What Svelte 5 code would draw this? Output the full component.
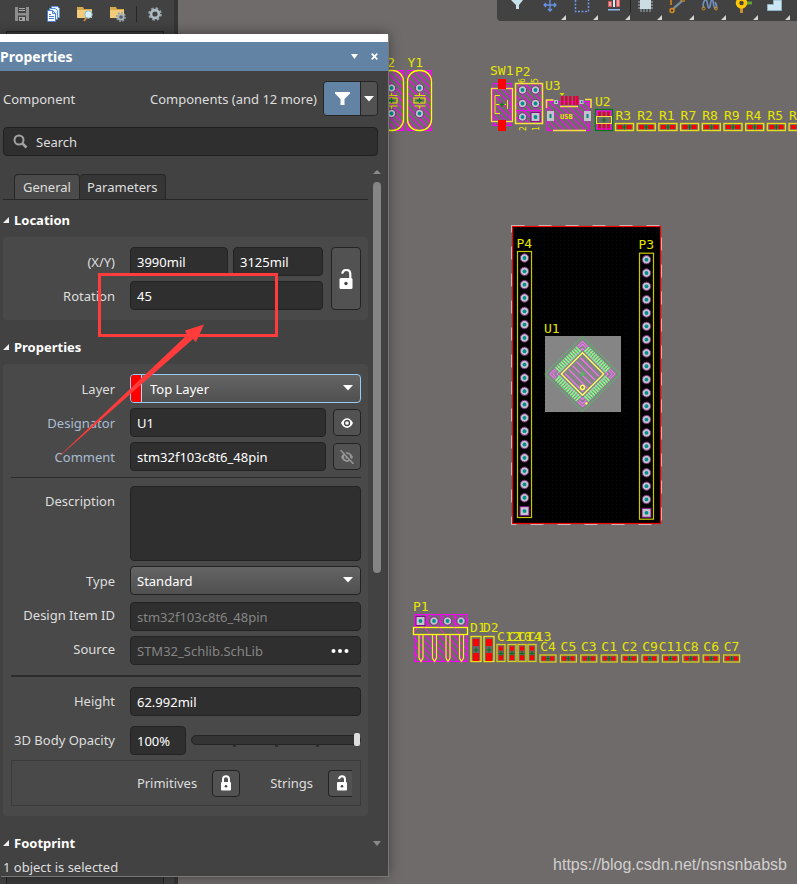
<script>
  let x = $state('3990mil');
  let y = $state('3125mil');
  let rotation = $state('45');
  let designator = $state('U1');
  let comment = $state('stm32f103c8t6_48pin');
  let description = $state('');
  let height = $state('62.992mil');
  let opacity = $state(100);

  const crystals = [391.5, 419.5];
  const resistors = ['R3', 'R2', 'R1', 'R7', 'R8', 'R9', 'R4', 'R5', 'R6'];
  const capacitors = ['C4', 'C5', 'C3', 'C1', 'C2', 'C9', 'C11', 'C8', 'C6', 'C7'];
  const uprightCaps = [
    { name: 'C12', x: 501 },
    { name: 'C10', x: 512 },
    { name: 'C14', x: 522 },
    { name: 'C13', x: 532 }
  ];
  const diodes = [
    { name: 'D1', x: 476 },
    { name: 'D2', x: 489 }
  ];
  const headers = [
    { name: 'P4', x: 524.5, y: 258 },
    { name: 'P3', x: 646.5, y: 259.7 }
  ];
  const pins = Array.from({ length: 20 }, (_, i) => i);
  const chipPins = Array.from({ length: 12 }, (_, i) => -14.3 + i * 2.6);
</script>

{#snippet pad(cx, cy, square)}
  {#if square}
    <rect x={cx - 4.5} y={cy - 4.5} width="9" height="9" fill="#c3c3c9" stroke="#7d0c86" />
  {:else}
    <circle {cx} {cy} r="4.2" fill="#c3c3c9" stroke="#7d2a86" />
  {/if}
  <circle {cx} {cy} r="1.9" fill="#008f8f" />
{/snippet}

{#snippet openLock()}
  <svg width="14" height="20" viewBox="0 0 14 20" aria-hidden="true">
    <path d="M3.2 4.6C3.6 2.2 5 1 7.2 1c2.700 0 4.100 1.600 4.100 4.200V10" fill="none" stroke="#fff" stroke-width="2.200" />
    <rect x=".5" y="9" width="13" height="11" rx="1.500" fill="#fff" />
    <circle cx="7" cy="14.500" r="1.700" fill="#444" />
  </svg>
{/snippet}

{#snippet cross(cx, cy)}
  <path d="M{cx - 2.5} {cy}h5M{cx} {cy - 2.5}v5" stroke="#007a18" stroke-width="1.2" />
{/snippet}

<div class="app">
  <svg class="canvas" width="797" height="884" viewBox="0 0 797 884" role="img" aria-label="PCB layout">
    <defs>
      <pattern id="hatch" width="7" height="7" patternUnits="userSpaceOnUse">
        <path d="M-1 -1L8 8M-1 6L1 8M6 -1L8 1" stroke="#f0f" stroke-width="1.2" />
      </pattern>
      <pattern id="grid" width="4" height="4" patternUnits="userSpaceOnUse">
        <rect width="1" height="1" fill="#0a0a0a" />
      </pattern>
    </defs>

    {#each crystals as cx, i}
      <text x={cx - 12} y="67">Y{2 - i}</text>
      <rect x={cx - 12} y="70.5" width="24" height="60" fill="url(#hatch)" stroke="#f0f" />
      <rect x={cx - 12} y="70.5" width="24" height="60" rx="11" fill="none" stroke="#ff0" stroke-width="1.300" />
      <path d="M{cx} 90V95.500M{cx - 5} 95.500h11M{cx} 106v6M{cx - 5} 106h11" stroke="#dfdf00" stroke-width="1.200" />
      <rect x={cx - 5.5} y="98" width="11" height="5" fill="#6f6b6a" stroke="#dfdf00" stroke-width="1.200" />
      {@render cross(cx, 100.5)}
      {@render pad(cx, 88, false)}
      {@render pad(cx, 113.5, false)}
    {/each}

    <text x="490" y="75">SW1</text>
    <rect x="493.500" y="83.500" width="18" height="42" fill="url(#hatch)" stroke="#f0f" />
    <rect x="491.500" y="88.500" width="21" height="33" fill="none" stroke="#ffe03c" stroke-width="1.300" />
    <path d="M500 95.500h-5v18h5M496 104.500h10M507.500 100v9" fill="none" stroke="#ee0" />
    <rect x="498" y="79" width="8" height="10" fill="#f00" />
    <rect x="498" y="120" width="8" height="11" fill="#f00" />
    {@render cross(502, 104.5)}

    <text x="515" y="76">P2</text>
    <rect x="515.500" y="83.500" width="27" height="40" fill="url(#hatch)" stroke="#ffe03c" stroke-width="1.500" />
    <path d="M516 110.500h26" stroke="#f0f" />
    {#each [90, 103.5, 117] as cy}
      {@render pad(522.5, cy, false)}
      {@render pad(535.5, cy, cy === 117)}
    {/each}
    <g class="tiny">
      <text transform="translate(525 83) rotate(-90)">6</text>
      <text transform="translate(538 83) rotate(-90)">5</text>
      <text transform="translate(526 131) rotate(-90)">2</text>
      <text transform="translate(539 131) rotate(-90)">1</text>
    </g>

    <text x="545" y="90">U3</text>
    <rect x="547.500" y="101.500" width="42" height="29" fill="url(#hatch)" stroke="#f0f" />
    <path d="M546.500 108v-8h7M585 99.500h6V108M553 130.500h33" fill="none" stroke="#ffe03c" stroke-width="1.500" />
    <path d="M559.500 93h5l-2.500 3z" fill="#dd0" />
    {#each [561, 565, 569, 573, 576] as px}
      <rect x={px} y="96" width="2.500" height="9" fill="#e0003c" />
    {/each}
    <path d="M560 106.500h18" stroke="#ffe03c" stroke-width="1.500" />
    <path d="M554 100h4v4h-4zM579.500 100h4v4h-4zM547 111h7v10h-7zM584 111h7v10h-7z" fill="#c3c3c9" />
    <path d="M555.500 101h1.500v2h-1.500zM581 101h1.500v2H581zM549.500 114h2v4h-2zM586.500 114h2v4h-2z" fill="#088" />
    <text class="usb" x="560" y="119">USB</text>

    <text x="595" y="106">U2</text>
    <rect x="595.500" y="109.500" width="17" height="21" fill="none" stroke="#057a18" stroke-width="1.300" />
    <path d="M598 111h3v6h-3zM602.500 111h3v6h-3zM607 111h3v6h-3zM598 124h3v6h-3zM602.500 124h3v6h-3zM607 124h3v6h-3z" fill="#e0003c" />
    <rect x="596.500" y="111" width="15" height="18" fill="none" stroke="#f0f" />
    <rect x="596.500" y="116.500" width="15" height="7" fill="none" stroke="#ffe03c" />
    {@render cross(604, 120)}

    {#each resistors as name, i}
      {@const rx = 615.5 + i * 21.7}
      <text x={rx} y="120">{name}</text>
      <rect x={rx} y="123.500" width="18" height="7" fill="#6f606a" stroke="#e8df1b" stroke-width="1.400" />
      <path d="M{rx + 2} 125h5v4h-5zM{rx + 11} 125h5v4h-5z" fill="#f00" />
      {@render cross(rx + 9, 127)}
    {/each}

    <rect x="513" y="226" width="148" height="298" fill="#000" />
    <rect x="515" y="228" width="144" height="294" fill="url(#grid)" />
    <rect x="511.500" y="225.500" width="150" height="299" fill="none" stroke="#c9c9c9" stroke-dasharray="13 14" />
    <rect x="512.500" y="226.500" width="148" height="297" fill="none" stroke="#f00000" stroke-width="1.200" />

    {#each headers as h}
      <text x={h.x - 8} y={h.y - 10.5}>{h.name}</text>
      <rect x={h.x - 7} y={h.y - 6.5} width="14" height="266" fill="none" stroke="#c8c800" stroke-width="1.200" />
      {#each pins as i}
        {@render pad(h.x, h.y + i * 13.32, i === 19)}
      {/each}
    {/each}

    <text x="544" y="333">U1</text>
    <rect x="545" y="336" width="76" height="76" fill="#858585" />
    <g transform="translate(582.500 374) rotate(45)">
      <rect x="-26.500" y="-26.500" width="53" height="53" fill="none" stroke="#63ad70" />
      <rect x="-18" y="-18" width="36" height="36" fill="none" stroke="#ff7bff" />
      {#each [0, 90, 180, 270] as angle}
        <g transform="rotate({angle})">
          <path d="M-23 -16v-7h7M-21 -16v-5h5" fill="none" stroke="#ff70ff" />
          {#each chipPins as px}
            <rect x={px - 0.75} y="-24" width="1.600" height="7" fill="#77ff83" />
          {/each}
          <path d="M-15 -21.500h30" stroke="#ffc5b8" stroke-dasharray="1 1.600" />
        </g>
      {/each}
      <rect x="-15" y="-15" width="30" height="30" fill="#858585" stroke="#ffff66" stroke-width="1.300" />
      <path d="M-13 -10h26M-13 -4.500h26M-13 1h26M-13 6.500h26M-13 12h26" stroke="#ff70ff" stroke-width="1.100" />
      <rect x="-2" y="-2" width="4" height="4" fill="#57b567" />
      <circle cx="9.500" cy="9.500" r="2" fill="#777" stroke="#ff5" stroke-width="1.500" />
      <circle cx="23.500" cy="18" r="1.300" fill="#ff5" />
    </g>

    <text x="413" y="611">P1</text>
    <rect x="414.500" y="614.500" width="53" height="47" fill="url(#hatch)" stroke="#f0f" />
    <path d="M427.500 615v12M441 615v12M454.500 615v12" stroke="#f0f" />
    {#each [420.5, 434, 447.5, 461] as px, i}
      {@render pad(px, 621, i === 0)}
      <path d="M{px - 1.5} 635v23l2 3.500l2 -3.500v-23" fill="none" stroke="#ffe926" stroke-width="1.200" />
    {/each}
    <rect x="413.500" y="627.500" width="54" height="7" fill="#706568" stroke="#ffff13" stroke-width="1.300" />
    <path d="M414 632l4-4M424 627.500l6 6.500M439 627.500l6 6.500M454 627.500l6 6.500" stroke="#ff30c0" />

    {#each diodes as d}
      <text x={d.x - 6} y="632">{d.name}</text>
      <rect x={d.x - 5} y="636.500" width="10" height="25" fill="#6f606a" stroke="#e8df1b" stroke-width="1.400" />
      <path d="M{d.x - 3} 639h6v7h-6zM{d.x - 3} 653h6v8h-6z" fill="#f00" />
      {@render cross(d.x, 650)}
    {/each}
    {#each uprightCaps as c}
      <text x={c.x - 4} y="641">{c.name}</text>
      <rect x={c.x - 4} y="644.500" width="8" height="17" fill="#6f606a" stroke="#d8d01b" stroke-width="1.300" />
      <path d="M{c.x - 2} 646.500h4v4h-4zM{c.x - 2} 655h4v5h-4z" fill="#f00" />
      {@render cross(c.x, 653.5)}
    {/each}
    {#each capacitors as name, i}
      {@const cx = 548 + i * 20.4}
      <text x={cx} y="651" text-anchor="middle">{name}</text>
      <rect x={cx - 8} y="655" width="16" height="7" fill="#6f606a" stroke="#d8d01b" stroke-width="1.300" />
      <path d="M{cx - 6} 656.500h4v4h-4zM{cx + 2} 656.500h4v4h-4z" fill="#f00" />
      {@render cross(cx, 658.5)}
    {/each}
  </svg>

  <div class="dock">
    <div class="dock-tools">
      <button aria-label="Save">
        <svg width="16" height="16" viewBox="0 0 16 16"><path fill="#8d8d8d" d="M1 1h14v14H1z" /><path fill="#444" d="M4 1h8v6H4zM4 9.500h8V15H4z" /><path fill="#aaa" d="M5 2h6v1H5zM5 4h6v1H5zM5 11h6v4H5z" /><path fill="#444" d="M6 12h2v2H6z" /></svg>
      </button>
      <button aria-label="Copy">
        <svg width="16" height="16" viewBox="0 0 16 16"><path fill="#e9f3ff" stroke="#5f93d8" d="M6.500.5h6l2 2v9h-8z" /><path fill="#e9f3ff" stroke="#5f93d8" d="M4.500 2.500h6l2 2v9h-8z" /><path fill="#fff" stroke="#4c82cd" d="M2.500 4.500h5l3 3v8h-8zM7.500 4.500v3h3M4 8.500h2M4 10.500h5M4 12.500h5" /></svg>
      </button>
      <button aria-label="Find project">
        <svg width="18" height="16" viewBox="0 0 18 16"><path fill="#d7a94f" d="M1 1h6l1 2h8v9H1z" /><path fill="#f2cb7b" d="M1 4h15v8H1z" /><path stroke="#c98b38" stroke-width="2" d="M11 11l-3 4" /><circle cx="12.500" cy="8.500" r="3.700" fill="#d8eefa" stroke="#8fb3c6" /></svg>
      </button>
      <button aria-label="Project options">
        <svg width="18" height="16" viewBox="0 0 18 16"><path fill="#d7a94f" d="M1 1h6l1 2h7v9H1z" /><path fill="#f2cb7b" d="M1 4h14v8H1z" /><circle cx="12" cy="11" r="4.300" fill="none" stroke="#8d9ba2" stroke-width="1.500" stroke-dasharray="2 1.300" /><circle cx="12" cy="11" r="2.700" fill="#56616a" stroke="#aab7be" stroke-width="1.700" /></svg>
      </button>
      <span class="sep"></span>
      <button aria-label="Settings">
        <svg width="16" height="16" viewBox="0 0 16 16"><circle cx="8" cy="8" r="5.800" fill="none" stroke="#98a5ac" stroke-width="2" stroke-dasharray="2.500 2.050" /><circle cx="8" cy="8" r="3.900" fill="none" stroke="#aebbc2" stroke-width="2.600" /></svg>
      </button>
    </div>
    <div class="dock-body"></div>
  </div>

  <div class="canvas-tools">
    <button aria-label="Filter"><svg width="32" height="21" viewBox="0 0 32 21"><path d="M9 0h12l-4 5v4l-3 0V5z" fill="#c7e2ec" /></svg></button>
    <button class="menu" aria-label="Move"><svg width="32" height="21" viewBox="0 0 32 21"><path d="M10 5h12M16 0v11M12 3l-2 2 2 2M20 3l2 2-2 2M14 9l2 2 2-2" fill="none" stroke="#6794e8" stroke-width="1.300" /></svg></button>
    <button class="menu" aria-label="Select"><svg width="32" height="21" viewBox="0 0 32 21"><path d="M9.500 0v11.500h13V0" fill="none" stroke="#6f95e8" stroke-width="1.500" stroke-dasharray="2 1.500" /></svg></button>
    <button class="menu" aria-label="Align"><svg width="32" height="21" viewBox="0 0 32 21"><path fill="#e8a0a0" stroke="#e05c5c" d="M10.500 1.500h3v5h-3zM18.500 -1h3v7.500h-3z" /><path fill="#d8ecfb" d="M15 0h2v7h-2z" /><path fill="#8bb8f0" d="M10 9h12v1.500H10z" /></svg></button>
    <span class="sep"></span>
    <button class="menu" aria-label="Place component"><svg width="32" height="21" viewBox="0 0 32 21"><path d="M11 0v12M14 0v12M17 0v12M20 0v12M8 2h15M8 5h15M8 8h15" stroke="#a4b4bb" /><rect x="10" y="0" width="11" height="9" fill="#cbdce3" /></svg></button>
    <button class="menu" aria-label="Route"><svg width="32" height="21" viewBox="0 0 32 21"><path d="M11 9L20 1M9 0v5M18 1h5" stroke="#c98320" stroke-width="1.700" /><path d="M12 8l8-7" stroke="#6f8eab" stroke-width="2" /><circle cx="10" cy="10.500" r="2" fill="none" stroke="#d98a1c" stroke-width="1.500" /></svg></button>
    <button class="menu" aria-label="Tune"><svg width="32" height="21" viewBox="0 0 32 21"><path d="M10 8c-2-3 0-8 2-8s1 8 3 8 1-8 3-8 1 8 3 8 2-3 0-6" fill="none" stroke="#7191bd" stroke-width="1.700" /><circle cx="9.500" cy="8.500" r="1.500" fill="none" stroke="#d98a1c" /><circle cx="22" cy="8.500" r="1.500" fill="none" stroke="#d98a1c" /></svg></button>
    <button class="menu" aria-label="Via"><svg width="32" height="21" viewBox="0 0 32 21"><path d="M16 3h10" stroke="#62a338" stroke-width="3" /><path d="M15.500 3v10" stroke="#c6922d" stroke-width="3" /><circle cx="15.500" cy="3" r="4" fill="#444" stroke="#ffc800" stroke-width="3.500" /></svg></button>
    <button class="menu" aria-label="Polygon"><svg width="32" height="21" viewBox="0 0 32 21"><path d="M9.500 10.500V4.500h6V0h8v10.500z" fill="#cce6f2" stroke="#8fb2c4" /></svg></button>
  </div>

  <section class="panel">
    <header class="titlebar">
      <h1>Properties</h1>
      <button aria-label="Panel menu"><svg width="7" height="5" viewBox="0 0 7 5"><path d="M0 0h7L3.500 5z" fill="#fff" /></svg></button>
      <button aria-label="Close"><svg width="7" height="7" viewBox="0 0 7 7"><path d="M.7.7l5.600 5.600M6.300.7L.7 6.300" stroke="#fff" stroke-width="1.800" /></svg></button>
    </header>

    <div class="scope">
      <span>Component</span>
      <span class="count">Components (and 12 more)</span>
      <div class="filter">
        <button class="funnel" aria-label="Filter"><svg width="15" height="13" viewBox="0 0 15 13"><path d="M0 0h15v1.500L9.500 7v6h-4V7L0 1.500z" fill="#fff" /></svg></button>
        <button class="more" aria-label="Filter options"><svg width="10" height="6" viewBox="0 0 10 6"><path d="M0 0h10L5 5.500z" fill="#fff" /></svg></button>
      </div>
    </div>

    <label class="search">
      <svg width="15" height="15" viewBox="0 0 15 15" aria-hidden="true"><circle cx="6" cy="6" r="4.500" fill="none" stroke="#a2a2a2" stroke-width="2" /><path d="M9.300 9.300L13.500 13.500" stroke="#a2a2a2" stroke-width="2.600" /></svg>
      <input type="search" placeholder="Search" aria-label="Search" />
    </label>

    <div class="content">
      <div class="main">
        <div class="tabs" role="tablist">
          <button role="tab" aria-selected="true" class="active">General</button>
          <button role="tab" aria-selected="false">Parameters</button>
        </div>

        <h2>Location</h2>
        <div class="group location">
          <div class="rows">
            <div class="row">
              <label for="x">(X/Y)</label>
              <input id="x" bind:value={x} />
              <input id="y" class="second" aria-label="Y" bind:value={y} />
            </div>
            <div class="row">
              <label for="rotation">Rotation</label>
              <input id="rotation" bind:value={rotation} />
            </div>
          </div>
          <button class="btn tall" aria-label="Lock position">{@render openLock()}</button>
        </div>

        <h2>Properties</h2>
        <div class="group">
          <div class="rows">
            <div class="row">
              <label for="layer">Layer</label>
              <div class="select layer">
                <span class="swatch"></span>
                <select id="layer"><option>Top Layer</option><option>Bottom Layer</option></select>
                <svg width="10" height="6" viewBox="0 0 10 6" aria-hidden="true"><path d="M0 0h10L5 5.500z" fill="#fff" /></svg>
              </div>
            </div>
            <div class="row">
              <label class="link" for="designator">Designator</label>
              <input id="designator" bind:value={designator} />
              <button class="btn" aria-label="Show designator">
                <svg width="12" height="10" viewBox="0 0 12 10"><path d="M0 5C3-1.500 9-1.500 12 5 9 11.500 3 11.500 0 5z" fill="#fff" /><circle cx="6" cy="5" r="2.500" fill="#fff" stroke="#444" stroke-width="1.300" /></svg>
              </button>
            </div>
            <div class="row">
              <label class="link" for="comment">Comment</label>
              <input id="comment" bind:value={comment} />
              <button class="btn" aria-label="Show comment">
                <svg width="14" height="14" viewBox="0 0 14 14"><path d="M1 7c3-6.500 9-6.500 12 0-3 6.500-9 6.500-12 0z" fill="#969696" /><circle cx="7" cy="7" r="2.300" fill="none" stroke="#505050" stroke-width="1.300" /><path d="M1.500 0L14 13" stroke="#505050" stroke-width="2" /><path d="M.5 0L13.500 14" stroke="#969696" stroke-width="1.500" /></svg>
              </button>
            </div>
          </div>
          <hr />
          <div class="rows">
            <div class="row top">
              <label for="description">Description</label>
              <textarea id="description" bind:value={description}></textarea>
            </div>
            <div class="row">
              <label for="type">Type</label>
              <div class="select">
                <select id="type"><option>Standard</option><option>Mechanical</option></select>
                <svg width="10" height="6" viewBox="0 0 10 6" aria-hidden="true"><path d="M0 0h10L5 5.500z" fill="#fff" /></svg>
              </div>
            </div>
          </div>
          <div class="rows library">
            <div class="row">
              <label for="item">Design Item ID</label>
              <input id="item" class="dim" readonly value="stm32f103c8t6_48pin" />
            </div>
            <div class="row">
              <label for="source">Source</label>
              <div class="browse">
                <input id="source" class="dim" readonly value="STM32_Schlib.SchLib" />
                <button aria-label="Browse"><svg width="18" height="4" viewBox="0 0 18 4"><circle cx="2.500" cy="2" r="2" fill="#fff" /><circle cx="9" cy="2" r="2" fill="#fff" /><circle cx="15.500" cy="2" r="2" fill="#fff" /></svg></button>
              </div>
            </div>
          </div>
          <hr class="thick" />
          <div class="rows body">
            <div class="row">
              <label for="height">Height</label>
              <input id="height" bind:value={height} />
            </div>
            <div class="row">
              <label for="opacity">3D Body Opacity</label>
              <input class="percent" aria-label="Opacity value" value="{opacity}%" readonly />
              <div class="slider">
                <input id="opacity" type="range" min="0" max="100" bind:value={opacity} />
                <span class="ticks"><i></i><i></i><i></i></span>
              </div>
            </div>
          </div>
          <div class="locks">
            <span>Primitives</span>
            <button class="btn" aria-label="Lock primitives">
              <svg width="12" height="16" viewBox="0 0 12 16"><path d="M3 8V4.500C3 2.300 4 1.200 6 1.200s3 1.100 3 3.300V8" fill="none" stroke="#fff" stroke-width="2" /><rect x="1" y="7" width="10" height="8.500" rx="1" fill="#fff" /><circle cx="6" cy="11.300" r="1.300" fill="#444" /></svg>
            </button>
            <span class="strings">Strings</span>
            <button class="btn cut" aria-label="Lock strings">
              <svg width="12" height="16" viewBox="0 0 12 16"><path d="M3 4C3.300 2 4.300 1.200 6 1.200c2 0 3 1.100 3 3.300V8" fill="none" stroke="#fff" stroke-width="2" /><rect x="1" y="7" width="10" height="8.500" rx="1" fill="#fff" /><circle cx="6" cy="11.300" r="1.300" fill="#444" /></svg>
            </button>
          </div>
        </div>

        <h2>Footprint</h2>
      </div>

      <div class="scrollbar" aria-hidden="true">
        <svg width="8" height="4" viewBox="0 0 8 4"><path d="M0 4h8L4 0z" fill="#8b8b8b" /></svg>
        <div class="track"><div class="thumb"></div></div>
        <svg width="8" height="5" viewBox="0 0 8 5"><path d="M0 0h8L4 5z" fill="#8b8b8b" /></svg>
      </div>
    </div>

    <footer>1 object is selected</footer>
  </section>

  <svg class="marks" width="300" height="480" viewBox="0 0 300 480" aria-hidden="true">
    <rect x="99.500" y="274.500" width="177" height="61" fill="none" stroke="#ff3b3b" stroke-width="3" />
    <path d="M53.500 461.500L187 335l-2-4.500L204 324.500l-8 17.500-3-3z" fill="#ff3b3b" />
  </svg>

  <div class="watermark">https://blog.csdn.net/nsnsnbabsb</div>
</div>

<style>
  :global(body) {
    margin: 0;
    background: #6f6b6a;
  }
  .app {
    position: relative;
    box-sizing: border-box;
    min-height: 100vh;
    padding-top: 34px;
    overflow: hidden;
    background: #6f6b6a;
    color: #dedede;
    font: 13px/18px "Noto Sans", "Open Sans", sans-serif;
  }
  .app *,
  .app *::before {
    box-sizing: border-box;
  }
  button,
  input,
  select,
  textarea {
    margin: 0;
    padding: 0;
    border: 0;
    background: none;
    color: inherit;
    font: inherit;
  }
  svg {
    display: block;
    flex: none;
  }
  .canvas {
    position: absolute;
    left: 0;
    top: 0;
  }
  .canvas text {
    fill: #e6e600;
    font: 13px "DejaVu Sans Mono", monospace;
  }
  .canvas .tiny text {
    font-size: 8px;
  }
  .canvas .usb {
    font: bold 7px "DejaVu Sans Mono", monospace;
  }

  .dock {
    position: absolute;
    top: 0;
    bottom: 0;
    left: 0;
    width: 178px;
    display: flex;
    flex-direction: column;
    border-right: 4px solid #353535;
    background: #424242;
  }
  .dock-tools {
    display: flex;
    align-items: center;
    gap: 15px;
    height: 31px;
    padding: 0 14px 3px;
  }
  .dock-tools .sep {
    margin: 0 -5px 0 -6px;
  }
  .sep {
    flex: none;
    width: 1px;
    height: 16px;
    background: #262626;
  }
  .dock-body {
    flex: 1;
    margin: 0 10px 0 6px;
    border: 1px solid #252525;
    border-bottom: 0;
    background: #3b3b3b;
  }

  .canvas-tools {
    position: absolute;
    top: 0;
    right: 0;
    width: 300px;
    height: 21px;
    display: flex;
    overflow: hidden;
    padding-left: 5px;
    border-radius: 0 0 0 4px;
    background: #424242;
  }
  .canvas-tools .sep {
    height: 13px;
    margin-right: -1px;
  }
  .canvas-tools .menu {
    position: relative;
  }
  .canvas-tools .menu::after {
    content: "";
    position: absolute;
    right: 0;
    bottom: 1px;
    border-left: 5px solid transparent;
    border-bottom: 5px solid #d5d5d5;
  }

  .panel {
    position: relative;
    width: min(388px, 100%);
    border-top: 8px solid #fff;
    background: #424242;
    box-shadow: 1px 1px 0 #777, 0 0 12px rgba(0, 0, 0, 0.45);
  }
  .titlebar {
    display: flex;
    align-items: center;
    gap: 13px;
    height: 29px;
    padding-right: 10px;
    background: #6283a3;
    color: #fff;
  }
  h1 {
    flex: 1;
    margin: 0;
    font-size: 14px;
    line-height: 18px;
  }
  .scope {
    display: flex;
    align-items: center;
    padding: 10px 10px 11px 3px;
  }
  .count {
    margin: 0 6px 0 auto;
  }
  .filter {
    display: flex;
    height: 35px;
    overflow: hidden;
    border: 1px solid #252525;
    border-radius: 4px;
  }
  .filter button {
    display: grid;
    place-items: center;
  }
  .funnel {
    width: 36px;
    background: #6283a3;
  }
  .more {
    width: 17px;
    border-left: 1px solid #252525;
    background: #525252;
  }
  .search {
    display: flex;
    align-items: center;
    gap: 8px;
    height: 29px;
    margin: 0 10px 10px 3px;
    padding: 0 9px;
    border: 1px solid #202020;
    border-radius: 4px;
    background: #2f2f2f;
  }
  .search input {
    flex: 1;
    min-width: 0;
    outline: 0;
  }
  .search input::placeholder {
    color: #dedede;
    opacity: 1;
  }
  .content {
    display: flex;
    gap: 4px;
    padding: 0 7px 0 3px;
  }
  .main {
    flex: 1;
    min-width: 0;
  }
  .tabs {
    display: flex;
    height: 34px;
    padding: 8px 11px 0;
    border-bottom: 1px solid #262626;
  }
  .tabs button {
    padding: 0 8px;
    border: 1px solid #262626;
    border-bottom: 0;
    border-radius: 4px 4px 0 0;
    background: #363636;
  }
  .tabs button + button {
    border-left: 0;
    padding: 0 7px;
  }
  .tabs .active {
    background: #4b4b4b;
  }
  h2 {
    display: flex;
    align-items: center;
    gap: 5px;
    margin: 11px 0 8px;
    color: #fff;
    font-size: 13px;
    line-height: 18px;
  }
  h2::before {
    content: "";
    border-left: 6px solid transparent;
    border-bottom: 6px solid #f0f0f0;
  }
  .group {
    padding: 10px 7px 10px 8px;
    border-radius: 4px;
    background: #494949;
  }
  .location {
    display: flex;
    gap: 8px;
  }
  .location + h2 {
    margin-top: 18px;
  }
  .rows {
    display: flex;
    flex: 1;
    flex-direction: column;
    gap: 5px;
    min-width: 0;
  }
  .row {
    display: flex;
    align-items: center;
  }
  .row > label {
    flex: none;
    width: 104px;
    margin-right: 15px;
    text-align: right;
    white-space: nowrap;
  }
  .row > .link {
    color: #a9bdd2;
  }
  .row > input,
  .browse,
  textarea {
    flex: 1;
    min-width: 0;
    height: 29px;
    padding: 0 6px;
    border: 1px solid #232323;
    border-radius: 4px;
    background: #2f2f2f;
    color: #fff;
  }
  .row > .second {
    flex: 0 0 90px;
    margin-left: 5px;
  }
  .row > input.dim,
  .dim {
    color: #858585;
  }
  .btn {
    flex: none;
    display: grid;
    place-items: center;
    width: 28px;
    height: 27px;
    border: 1px solid #232323;
    border-radius: 4px;
    background: #525252;
  }
  .row .btn {
    margin-left: 7px;
  }
  .tall {
    width: 30px;
    height: auto;
  }
  .select {
    position: relative;
    flex: 1;
    height: 29px;
    overflow: hidden;
    border: 1px solid #232323;
    border-radius: 4px;
    background: linear-gradient(#646464, #505050);
    color: #fff;
  }
  .select select {
    width: 100%;
    height: 100%;
    padding: 0 24px 0 6px;
    appearance: none;
  }
  .select svg {
    position: absolute;
    right: 7px;
    top: 10px;
    pointer-events: none;
  }
  .layer {
    display: flex;
    border-color: #96cbf8;
  }
  .layer select {
    padding-left: 8px;
  }
  .swatch {
    flex: none;
    width: 11px;
    border-right: 1px solid #b9dcfa;
    background: #f00;
  }
  hr {
    height: 1px;
    margin: 6px 0 8px;
    border: 0;
    background: #2c2c2c;
  }
  .thick {
    height: 2px;
    margin: 10px 0;
  }
  .top {
    align-items: flex-start;
  }
  .top > label {
    padding-top: 6px;
  }
  textarea {
    height: 75px;
    resize: none;
  }
  .library {
    margin-top: 7px;
  }
  .library label {
    padding-bottom: 3px;
  }
  .body label {
    padding-bottom: 2px;
  }
  .browse {
    display: flex;
    align-items: center;
    padding-right: 11px;
  }
  .browse input {
    flex: 1;
    min-width: 0;
  }
  .body {
    gap: 10px;
  }
  .row > .percent {
    flex: 0 0 56px;
  }
  .slider {
    flex: 1;
    min-width: 0;
    margin-left: 5px;
    padding-bottom: 2px;
  }
  .slider input {
    display: block;
    width: 100%;
    height: 14px;
    appearance: none;
  }
  .slider input::-webkit-slider-runnable-track {
    height: 10px;
    border: 1px solid #252525;
    border-radius: 5px;
    background: #343434;
  }
  .slider input::-webkit-slider-thumb {
    width: 6px;
    height: 13px;
    margin-top: -3px;
    border-radius: 2px;
    appearance: none;
    background: #dedede;
  }
  .ticks {
    display: flex;
    justify-content: space-between;
    height: 2px;
    margin-top: -2px;
    padding: 0 42px;
  }
  .ticks i {
    width: 3px;
    background: #2d2d2d;
  }
  .locks {
    display: flex;
    align-items: center;
    justify-content: flex-end;
    gap: 15px;
    height: 46px;
    margin-top: 5px;
    padding-right: 8px;
    border: 1px solid #3b3b3b;
  }
  .strings {
    margin-left: 15px;
  }
  .cut {
    width: 24px;
    border-right: 0;
    border-radius: 4px 0 0 4px;
    justify-content: end;
    padding-right: 4px;
  }
  .group + h2:last-child {
    margin: 18px 0 6px;
  }
  .scrollbar {
    display: flex;
    flex-direction: column;
    align-items: center;
    gap: 8px;
    width: 9px;
    padding: 4px 0 12px;
  }
  .track {
    flex: 1;
    width: 8px;
  }
  .thumb {
    height: 60%;
    border-radius: 4px;
    background: #858585;
  }
  footer {
    padding: 0 3px;
    line-height: 18px;
  }
  .marks {
    position: absolute;
    left: 0;
    top: 0;
    pointer-events: none;
  }
  .watermark {
    position: absolute;
    right: 10px;
    bottom: 8px;
    color: #d0cfcf;
    font: 16px/22px "Liberation Sans", Arial, sans-serif;
  }
</style>
